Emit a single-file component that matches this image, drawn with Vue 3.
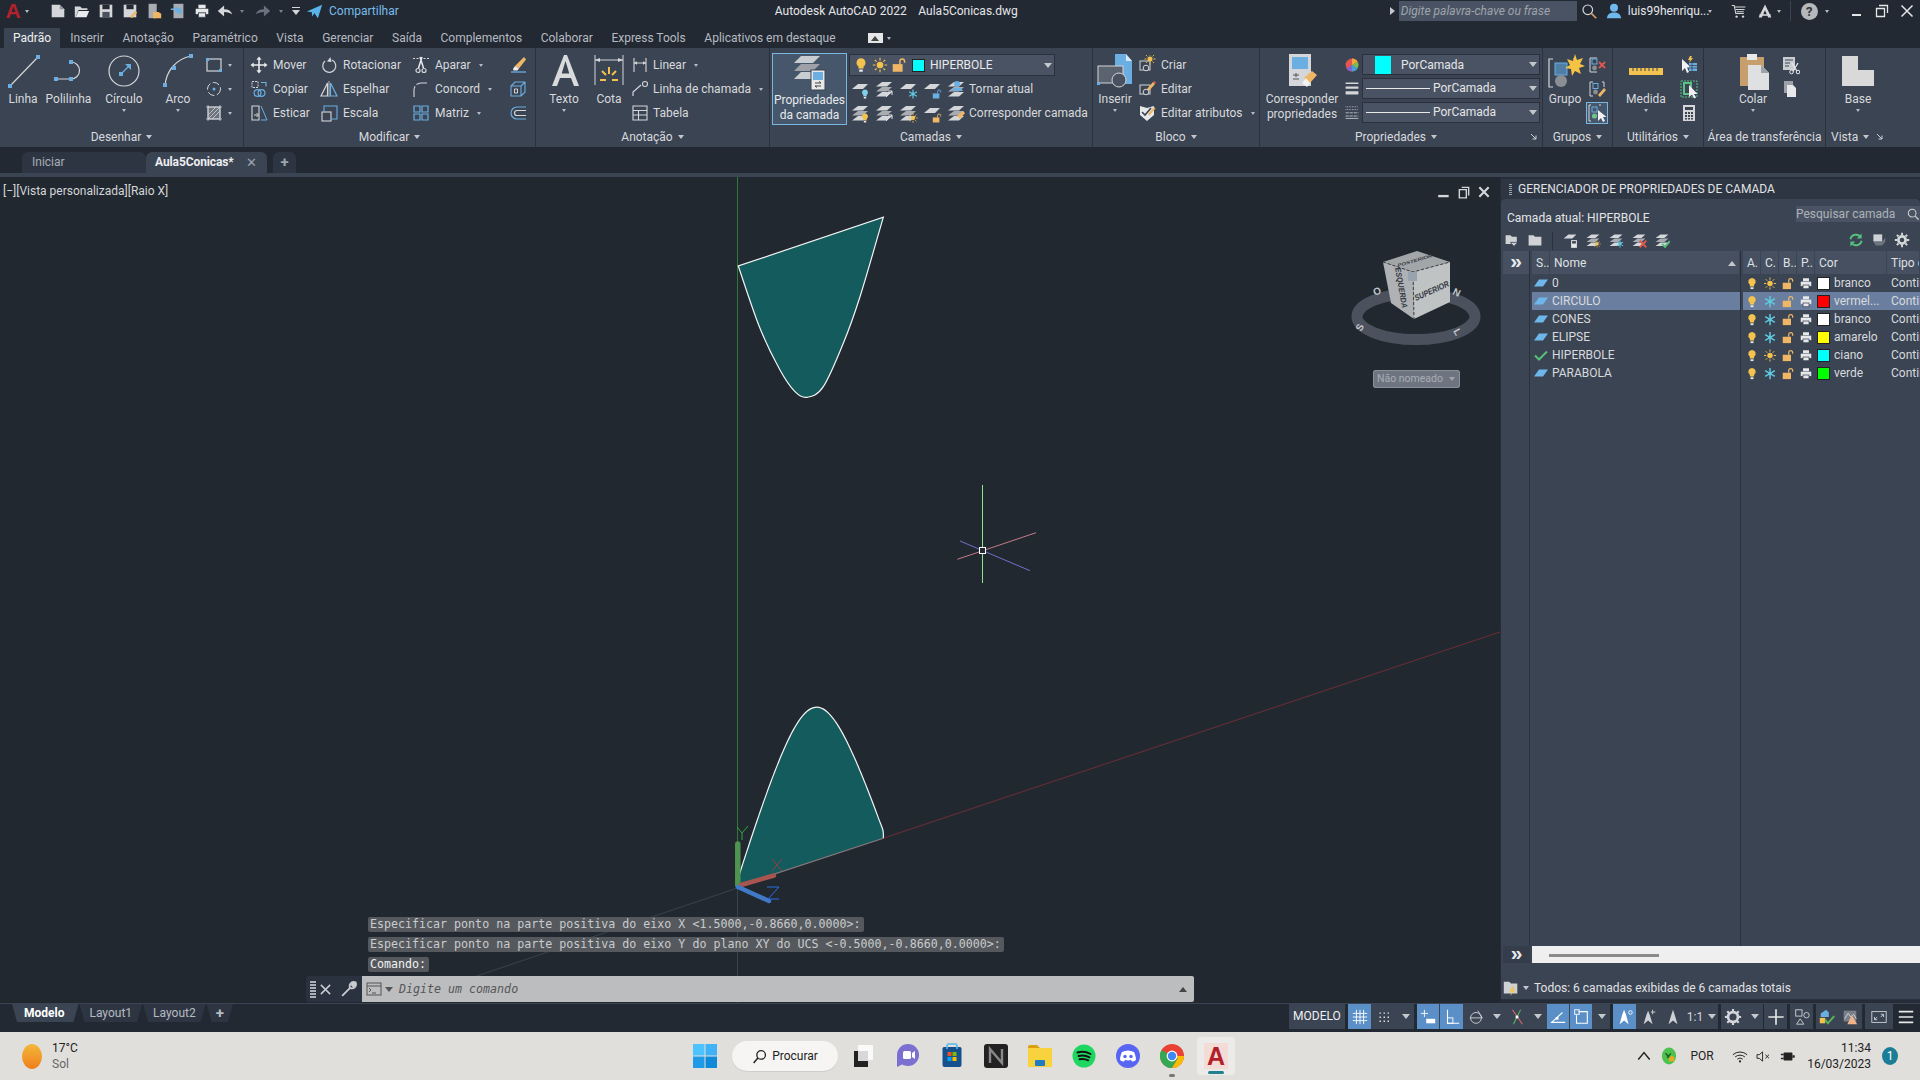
<script setup>
const G = '#d4d6d9'
const B = '#6aaee2'
const Y = '#f4c24e'
const O = '#efb765'

const bulbShape = c => `<path d="M10 2.5a5 5 0 0 0-2.8 9.1V14h5.6v-2.400A5 5 0 0 0 10 2.500z" fill="${c}"/><rect x="8" y="15" width="4" height="2.500" fill="#e8e8e8"/>`
const sunShape = c => `<circle cx="10" cy="10" r="3.600" fill="${c}"/><path d="M10 2v3M10 15v3M2 10h3M15 10h3M4.300 4.300l2 2M13.700 13.700l2 2M15.700 4.300l-2 2M6.300 13.700l-2 2" stroke="${c}" stroke-width="1.300"/>`
const snowShape = c => `<path d="M10 2.500v15M3.500 6.200l13 7.600M16.500 6.200l-13 7.600" stroke="${c}" stroke-width="2"/><circle cx="10" cy="10" r="2.400" fill="${c}"/>`
const lockShape = c => `<rect x="3" y="9" width="11" height="8.500" fill="${c}"/><path d="M11 9V6a2.600 2.600 0 0 1 5.200 0v1.500" fill="none" stroke="${c}" stroke-width="1.600"/>`
const printShape = `<rect x="6" y="3" width="8" height="4" fill="#e6e8ea"/><rect x="3" y="7.500" width="14" height="6" fill="#e6e8ea"/><rect x="6" y="12" width="8" height="5" fill="#e6e8ea" stroke="#3b4453"/>`

// smooth curve through the points read off the drawing (catmull-rom)
function curve(pts) {
  let d = `M${pts[0][0]} ${pts[0][1]}`
  for (let i = 0; i < pts.length - 1; i++) {
    const p0 = pts[i - 1] || pts[i]
    const p1 = pts[i]
    const p2 = pts[i + 1]
    const p3 = pts[i + 2] || p2
    const c1 = [p1[0] + (p2[0] - p0[0]) / 6, p1[1] + (p2[1] - p0[1]) / 6]
    const c2 = [p2[0] - (p3[0] - p1[0]) / 6, p2[1] - (p3[1] - p1[1]) / 6]
    d += `C${c1[0].toFixed(1)} ${c1[1].toFixed(1)} ${c2[0].toFixed(1)} ${c2[1].toFixed(1)} ${p2[0]} ${p2[1]}`
  }
  return d
}
const topCurve = curve([[738.3, 266], [760, 328.3], [780, 370], [795, 391.7], [807.3, 397.3], [823.3, 386.7], [843.3, 343.3], [860, 296.7], [883.3, 217.3]])

// lower section is a tilted hyperbola, fitted to the points on the drawing
const lowPts = []
for (let dx = -76; dx <= 68; dx += 4) {
  const y = 707.3 + 3.3 * (Math.sqrt(dx * dx + 1369) - 37) - 0.15 * dx
  lowPts.push([815 + dx, +y.toFixed(1)])
}
lowPts.push([883.3, 838.3])
const lowCurve = curve(lowPts)

// stacks of layer sheets for the layer tools, the badge goes bottom right
const one = (y = 5) => `<path d="M8 ${y}h10l-5 5H2z" fill="${G}"/>`
const stack = `<path d="M8 3h10l-5 4.500H2z" fill="${G}"/><path d="M8 8h10l-5 4.500H2z" fill="#a9adb2"/><path d="M8 13h10l-5 4.500H2z" fill="${G}"/>`
const mini = (s, x = 9, y = 9) => `<g transform="translate(${x} ${y}) scale(.6)">${s}</g>`

const ic = {
  rect: `<rect x="3" y="4" width="14" height="12" fill="none" stroke="${G}" stroke-width="1.200"/><path d="M2 3h3v3H2zM15 14h3v3h-3z" fill="${B}"/>`,
  cdash: `<circle cx="10" cy="10" r="6.500" fill="none" stroke="${G}" stroke-dasharray="7 2.500"/><circle cx="10" cy="10" r="1.500" fill="${B}"/>`,
  hatch: `<rect x="4" y="4" width="12" height="12" fill="#6d7480" stroke="${G}"/><path d="M4 12l8-8M4 16l12-12M8 16l8-8" stroke="${G}" stroke-width=".8"/><path d="M2 4h16M2 16h16M4 2v16M16 2v16" stroke="${G}" stroke-width=".7"/>`,
  move: `<path d="M10 1.500l2.600 3.200h-1.800v4.500h4.500V7.400L18.500 10l-3.200 2.600v-1.800h-4.500v4.500h1.800L10 18.500l-2.600-3.200h1.800v-4.500H4.700v1.800L1.500 10l3.200-2.600v1.800h4.500V4.700H7.400z" fill="#e9ebed"/>`,
  rotate: `<path d="M13 5a6.500 6.500 0 1 1-7 1" fill="none" stroke="${G}" stroke-width="1.200"/><path d="M6.500 2l1 5-4.500-.5z" fill="${G}" transform="translate(5 0)"/>`,
  trim: `<path d="M2 3.500h16" stroke="${G}" stroke-dasharray="2 1.500"/><path d="M11 2L7.500 13M9 2l3.500 11" stroke="#e9ebed" stroke-width="1.500"/><circle cx="7" cy="15.500" r="2" fill="none" stroke="${G}" stroke-width="1.200"/><circle cx="13" cy="15.500" r="2" fill="none" stroke="${G}" stroke-width="1.200"/>`,
  eraser: `<path d="M16 2l2 2.500-7 9-4-2.500z" fill="${O}"/><path d="M7 11l4 2.500-1.500 2H5.500L5 14z" fill="#eee"/><path d="M3 17h15" stroke="${B}" stroke-width="1.300"/>`,
  copy: `<rect x="3" y="2.500" width="6" height="6" fill="none" stroke="${G}" stroke-dasharray="2 1"/><path d="M12 3.500h5v4" fill="none" stroke="${B}" stroke-width="1.200"/><circle cx="8.500" cy="14" r="3.400" fill="none" stroke="${B}" stroke-width="1.200"/><circle cx="12.500" cy="14" r="3.400" fill="none" stroke="${B}" stroke-width="1.200"/>`,
  mirror: `<path d="M8.500 4v13H2z" fill="none" stroke="${G}" stroke-width="1.200"/><path d="M11.500 4v13H18z" fill="none" stroke="${B}" stroke-width="1.200"/><path d="M10 2v16" stroke="${G}" stroke-width=".8"/>`,
  fillet: `<path d="M3 18V11a7 7 0 0 1 7-7h7" fill="none" stroke="${G}" stroke-width="1.100" stroke-dasharray="11 2"/>`,
  box3d: `<path d="M3 7h10v10H3zM3 7l4-4h10v10l-4 4M13 7l4-4" fill="none" stroke="${B}" stroke-width="1.100"/><path d="M6.500 10h3v4h-3z" fill="none" stroke="${G}"/>`,
  stretch: `<path d="M3 3h7v14H3z" fill="none" stroke="${G}" stroke-width="1.100"/><path d="M12 3l6 14h-6" fill="none" stroke="${B}" stroke-width="1"/><path d="M5 12h4M7.500 10l2 2-2 2" fill="none" stroke="${G}"/>`,
  scale: `<rect x="3" y="9" width="9" height="9" fill="none" stroke="${G}" stroke-width="1.100"/><path d="M5 9V3h13v13h-6" fill="none" stroke="${B}" stroke-width="1.100"/>`,
  matrix: `<path d="M3 3h6v6H3zM11 3h6v6h-6zM3 11h6v6H3zM11 11h6v6h-6z" fill="none" stroke="${B}" stroke-width="1.200"/>`,
  offset: `<path d="M18 4H9a6 6 0 0 0 0 12h9" fill="none" stroke="${B}" stroke-width="1.200"/><path d="M18 7.500H9a2.500 2.500 0 0 0 0 5h9" fill="none" stroke="${G}" stroke-width="1.200"/>`,
  dim: `<path d="M4 3v14M16 3v14M4 8h12" stroke="${G}" stroke-width="1.100"/><path d="M4 8l3-1.800v3.600zM16 8l-3-1.800v3.600z" fill="${G}"/>`,
  leader: `<circle cx="15" cy="5" r="2.500" fill="none" stroke="${G}" stroke-width="1.100"/><path d="M3 17v-4l8-7" fill="none" stroke="${G}" stroke-width="1.200"/>`,
  table: `<path d="M3 3h14v14H3zM3 7.500h14M3 12h14M8.500 7.500V17" fill="none" stroke="${G}" stroke-width="1.100"/>`,
  create: `<rect x="3" y="6" width="10" height="9" fill="none" stroke="${G}"/><circle cx="9" cy="13" r="2.800" fill="#3b4453" stroke="${G}"/><g transform="translate(6 -3) scale(.7)">${sunShape(Y)}</g>`,
  edit: `<rect x="3" y="6" width="10" height="9" fill="none" stroke="${G}"/><circle cx="9" cy="13" r="2.800" fill="#3b4453" stroke="${G}"/><path d="M10 10l6-7 2 2-6 7z" fill="${O}"/><path d="M16 3l2 2 1-1.500-1.500-1.500z" fill="#e25b4f"/>`,
  attrs: `<path d="M3 3l7 2 7-2v9l-7 6-7-6z" fill="#e6e8ea"/><path d="M5 9l3 3 6-7" fill="none" stroke="#3b4453" stroke-width="1.600"/><path d="M11 11l6-7 1.500 1.500-6 7z" fill="${O}"/>`,
  groupX: `<path d="M3 3h7M3 17h7M3 3v14" fill="none" stroke="${G}"/><rect x="5" y="4" width="5" height="5" fill="none" stroke="${B}"/><circle cx="7.500" cy="13" r="2.400" fill="#8a8f96"/><path d="M12 7l6 6M18 7l-6 6" stroke="#e2574c" stroke-width="1.800"/>`,
  groupEd: `<path d="M3 3h3M3 17h3M3 3v14M15 3h2v5" fill="none" stroke="${G}"/><rect x="6" y="4.500" width="5" height="5" fill="none" stroke="${B}"/><circle cx="8.500" cy="13" r="2.400" fill="#8a8f96"/><path d="M11 16l6-7 2 2-6 7z" fill="${O}"/>`,
  groupSel: `<path d="M4 2H2v16h2M12 2h2" fill="none" stroke="${G}"/><rect x="5" y="4" width="5" height="5" fill="none" stroke="${B}"/><circle cx="7.500" cy="13" r="2.600" fill="#6fc28c"/><path d="M11 7v11l3-3 2 4 2-1-2-4h3.500z" fill="#f2f2f2"/>`,
  pick: `<path d="M3 4v12l3-3 2 5 2-1-2-4.500h4z" fill="#f2f2f2"/><rect x="10" y="8" width="8" height="8" fill="${B}"/><path d="M10 10.500h8M10 13h8M13 8v8" stroke="#3b4453" stroke-width=".8"/><path d="M11 1l-2 4h2l-1 3 4-5h-2l1-2z" fill="${Y}"/>`,
  qsel: `<rect x="2" y="2" width="16" height="16" fill="none" stroke="#5bc184" stroke-dasharray="2 1"/><rect x="5" y="4" width="7" height="11" fill="none" stroke="#5bc184" stroke-width="2"/><path d="M10 6v12l3-2.500 2 4 2-1-2-3.500h3.500z" fill="#f2f2f2"/>`,
  calc: `<rect x="4" y="2" width="12" height="16" fill="#d4d6d9"/><rect x="6" y="4" width="8" height="3" fill="#3b4453"/><path d="M6 9h2v2H6zM9 9h2v2H9zM12 9h2v2h-2zM6 12h2v2H6zM9 12h2v2H9zM12 12h2v2h-2zM6 15h2v1.500H6zM9 15h2v1.500H9zM12 15h2v1.500h-2z" fill="#3b4453"/>`,
  cut: `<rect x="3" y="2" width="12" height="13" fill="#c9ccd0"/><path d="M5 5h8M5 8h5M5 11h4" stroke="#3b4453"/><path d="M12 8l6 10M18 8l-6 10" stroke="#e9ebed" stroke-width="1.300"/><circle cx="11.500" cy="17" r="1.800" fill="#3b4453" stroke="#e9ebed"/><circle cx="18" cy="17" r="1.800" fill="#3b4453" stroke="#e9ebed"/>`,
  copy2: `<rect x="4" y="2" width="9" height="12" fill="#9ea2a8"/><path d="M7 6h6l3 3v9H7z" fill="#e6e8ea"/>`,
  color: `<circle cx="10" cy="10" r="8" fill="#e2574c"/><path d="M10 10V2a8 8 0 0 1 7 4z" fill="#f0a63a"/><path d="M10 10l7-4a8 8 0 0 1 0 8z" fill="#74c04d"/><path d="M10 10l7 4a8 8 0 0 1-7 4z" fill="#3fa2d8"/><path d="M10 10v8a8 8 0 0 1-7-4z" fill="#8761c8"/>`,
  weight: `<path d="M2 3h16v2H2zM2 8h16v3H2zM2 14h16v4H2z" fill="${G}"/>`,
  ltype: `<path d="M2 3.500h16M2 7h16" stroke="${G}" stroke-dasharray="1 1"/><path d="M2 11h16M2 15h16" stroke="${G}" stroke-dasharray="4 1"/><path d="M2 18h16" stroke="${G}"/>`
}

// layer tools of the Camadas panel, row by row
const layerRow1 = [
  one() + mini(bulbShape('#7fd0e8')),
  stack + `<path d="M12 18l6-6M18 16v-4h-4" fill="none" stroke="#e8e8e8"/>`,
  one() + mini(snowShape('#5fc8de')),
  one() + mini(lockShape(B)),
  stack + `<circle cx="11" cy="5" r="3" fill="${B}"/><path d="M5 12h12l-2-3H8z" fill="${B}"/>`
]
const layerRow2 = [
  stack + mini(bulbShape(Y)),
  stack + `<path d="M12 18l6-6M18 16v-4h-4" fill="none" stroke="#e8e8e8"/>`,
  stack + mini(sunShape(Y)),
  one() + mini(lockShape(O)),
  stack + `<path d="M11 13l6-5 2 2-5 6z" fill="${O}"/>`
]

const panels = [
  { name: 'Desenhar', cls: 'p-draw', items: [
    { big: 'Linha', w: 'w46', caret: false, svg: `<path d="M7 33L35 4" stroke="${G}" stroke-width="1.200"/><path d="M5 31h4v4H5zM33 2h4v4h-4z" fill="${B}"/>` },
    { big: 'Polilinha', w: 'w45', svg: `<path d="M7 26h15M21 9h1a8.500 8.500 0 0 1 0 17" fill="none" stroke="${G}" stroke-width="1.200"/><path d="M5 24h4v4H5zM20 24h4v4h-4zM20 7h4v4h-4z" fill="${B}"/>` },
    { big: 'Círculo', w: 'w66', caret: true, svg: `<circle cx="20" cy="18" r="15" fill="none" stroke="${G}" stroke-width="1.200"/><path d="M17 21l8-8" stroke="${B}" stroke-width="1.200"/><path d="M15 19h4v4h-4z" fill="${B}"/><path d="M27 11v6l-6-6z" fill="${B}"/>` },
    { big: 'Arco', w: 'w42', caret: true, svg: `<path d="M7 33C8 18 18 6 33 3" fill="none" stroke="${G}" stroke-width="1.200"/><path d="M5 30h4v4H5zM14 13h4v4h-4zM31 1h4v4h-4z" fill="${B}"/>` },
    { rows: [{ icon: 'rect', caret: true }, { icon: 'cdash', caret: true }, { icon: 'hatch', caret: true }], w: 'r-draw' }
  ] },
  { name: 'Modificar', cls: 'p-mod', items: [
    { rows: [{ icon: 'move', text: 'Mover' }, { icon: 'copy', text: 'Copiar' }, { icon: 'stretch', text: 'Esticar' }], w: 'r-70' },
    { rows: [{ icon: 'rotate', text: 'Rotacionar' }, { icon: 'mirror', text: 'Espelhar' }, { icon: 'scale', text: 'Escala' }], w: 'r-92' },
    { rows: [{ icon: 'trim', text: 'Aparar', caret: true }, { icon: 'fillet', text: 'Concord', caret: true }, { icon: 'matrix', text: 'Matriz', caret: true }], w: 'r-97' },
    { rows: [{ icon: 'eraser' }, { icon: 'box3d' }, { icon: 'offset' }] }
  ] },
  { name: 'Anotação', cls: 'p-ann', items: [
    { big: 'Texto', w: 'w48', caret: true, svg: `<path d="M20 2h3l12 31h-5l-3-8H16l-3 8H8zM21.500 8L17.700 20.500h7.600z" fill="#d8dadc" fill-rule="evenodd"/>` },
    { big: 'Cota', w: 'w42', svg: `<path d="M6 2v30M34 2v30M6 7h28" stroke="${G}" stroke-width="1"/><path d="M6 7l5-2v4zM34 7l-5-2v4z" fill="${G}"/><path d="M20 14v7M13 18l4 4M27 18l-4 4M11 27h6M23 27h6" stroke="${Y}" stroke-width="2"/>` },
    { rows: [{ icon: 'dim', text: 'Linear', caret: true }, { icon: 'leader', text: 'Linha de chamada', caret: true }, { icon: 'table', text: 'Tabela' }], w: 'r-ann' }
  ] },
  { name: 'Camadas', cls: 'p-lay', custom: 'layers' },
  { name: 'Bloco', cls: 'p-blk', items: [
    { big: 'Inserir', w: 'w44', caret: true, svg: `<path d="M20 1h11l6 7v23H20z" fill="${B}"/><path d="M31 1l6 7h-6z" fill="#d7e7f3"/><rect x="3" y="13" width="25" height="17" fill="#5b6370" stroke="${G}"/><circle cx="24" cy="27" r="7" fill="#4a5260" stroke="${G}"/><path d="M2 29h3v3H2z" fill="${B}"/>` },
    { rows: [{ icon: 'create', text: 'Criar' }, { icon: 'edit', text: 'Editar' }, { icon: 'attrs', text: 'Editar atributos', caret: true }], w: 'r-blk' }
  ] },
  { name: 'Propriedades', cls: 'p-prop', custom: 'props', arrow: true },
  { name: 'Grupos', cls: 'p-grp', items: [
    { big: 'Grupo', w: 'w44', svg: `<path d="M8 6H4v28h4M28 6h3" fill="none" stroke="${G}" stroke-width="1.200"/><rect x="10" y="10" width="12" height="12" fill="#4f7fa6" stroke="${B}"/><circle cx="16" cy="28" r="6" fill="#8a8f96"/><path d="M30 1l2 6 6-2-3 6 5 2-6 2 2 6-6-3-3 5-1-7-6-1 5-3-3-6 6 2z" fill="#f5c344"/>` },
    { rows: [{ icon: 'groupX' }, { icon: 'groupEd' }, { icon: 'groupSel', on: true }] }
  ] },
  { name: 'Utilitários', cls: 'p-utl', items: [
    { big: 'Medida', w: 'w66', caret: true, svg: `<rect x="3" y="15" width="34" height="7" fill="${Y}"/><path d="M7 15v3M11 15v3M15 15v3M19 15v3M23 15v3M27 15v3M31 15v3" stroke="#3b4453"/>` },
    { rows: [{ icon: 'pick' }, { icon: 'qsel' }, { icon: 'calc' }] }
  ] },
  { name: 'Área de transferência', cls: 'p-clip', noCaret: true, items: [
    { big: 'Colar', w: 'w54 colar', caret: true, svg: `<rect x="7" y="4" width="24" height="29" fill="#c79f6c"/><rect x="14" y="1" width="10" height="6" fill="#e8e8e8"/><path d="M15 12h13l8 8v17H15z" fill="#dfe0e2"/><path d="M28 12l8 8h-8z" fill="#9fa3a8"/>` },
    { rows: [{ icon: 'cut' }, { icon: 'copy2' }, {}] }
  ] },
  { name: 'Vista', cls: 'p-view', arrow: true, items: [
    { big: 'Base', w: 'w64', caret: true, svg: `<path d="M4 3h16v14h16v16H4z" fill="#d9d9d9"/>` }
  ] }
]

const tabs = ['Padrão', 'Inserir', 'Anotação', 'Paramétrico', 'Vista', 'Gerenciar', 'Saída', 'Complementos', 'Colaborar', 'Express Tools', 'Aplicativos em destaque']

const quick = [
  `<path d="M3 3h9l5 5v9H3z" fill="${G}"/><path d="M12 3l5 5h-5z" fill="#8d929a"/>`,
  `<path d="M2 5h6l2 2h6v2H6l-3 8H2z" fill="${G}"/><path d="M6 10h12l-3 7H3z" fill="#e8eaec"/>`,
  `<path d="M3 3h14v14H3z" fill="${G}"/><rect x="6" y="3" width="8" height="5" fill="#232a34"/><rect x="6" y="11" width="8" height="6" fill="#4a5260"/>`,
  `<path d="M3 3h14v14H3z" fill="${G}"/><rect x="6" y="3" width="8" height="5" fill="#232a34"/><path d="M10 16l6-6 2 2-6 6z" fill="${O}"/>`,
  `<path d="M4 2h9v16H4z" fill="#a8acb2"/><path d="M9 11h6l3 2v5H9z" fill="${O}"/>`,
  `<path d="M5 2h11v16H5z" fill="#a8acb2"/><path d="M2 8h8M7 5l3 3-3 3" fill="none" stroke="${B}" stroke-width="1.600"/><rect x="9" y="7" width="5" height="6" fill="${B}"/>`,
  printShape
]

const layerNames = [
  { n: '0', color: '#ffffff', c: 'branco', sun: true },
  { n: 'CIRCULO', color: '#ff0000', c: 'vermel...', sel: true },
  { n: 'CONES', color: '#ffffff', c: 'branco' },
  { n: 'ELIPSE', color: '#ffff00', c: 'amarelo' },
  { n: 'HIPERBOLE', color: '#00ffff', c: 'ciano', sun: true, cur: true },
  { n: 'PARABOLA', color: '#00ff00', c: 'verde' }
]

const palTools = [
  `<path d="M2 4h6l2 2h6v9H2z" fill="#cfd2d5"/><path d="M8 13h9l-4.500 5z" fill="#cfd2d5" stroke="#3b4453"/>`,
  `<path d="M2 4h6l2 2h8v11H2z" fill="#cfd2d5"/>`
]
const palTools2 = [
  one(3) + mini(`<rect x="4" y="2" width="12" height="16" fill="#e8e8e8"/><rect x="6" y="4" width="8" height="5" fill="#3b4453"/>`),
  stack + mini(sunShape(Y)),
  stack + mini(snowShape('#5fc8de')),
  stack + mini(`<path d="M3 3l14 14M17 3L3 17" stroke="#e2574c" stroke-width="4"/>`),
  stack + mini(`<path d="M2 10l6 6L18 4" fill="none" stroke="#57c07a" stroke-width="4"/>`)
]

const car = { caret: true, w: 17 }
const statusGroups = [
  { items: [
    { w: 23, on: true, svg: `<path d="M6 2v16M10 2v16M14 2v16M2 6h16M2 10h16M2 14h16" stroke="#fff"/>` },
    { w: 24, svg: `<path d="M5 5h1.500v1.500H5zM9.500 5H11v1.500H9.500zM14 5h1.500v1.500H14zM5 9.500h1.500V11H5zM9.500 9.500H11V11H9.500zM14 9.500h1.500V11H14zM5 14h1.500v1.500H5zM9.500 14H11v1.500H9.500zM14 14h1.500v1.500H14z" fill="#e8e8e8"/>` },
    car
  ] },
  { items: [
    { w: 22, on: true, svg: `<path d="M6 2v8M2 6h8" stroke="#fff"/><rect x="8" y="12" width="10" height="5" fill="#fff"/>` },
    { w: 23, on: true, svg: `<path d="M5 2v15h13" fill="none" stroke="#fff" stroke-width="1.200"/><rect x="5" y="11" width="6" height="6" fill="none" stroke="#fff"/>` },
    { w: 23, svg: `<circle cx="10" cy="11" r="6" fill="none" stroke="#cfd2d5"/><path d="M3 11h14L12 3" fill="none" stroke="#cfd2d5"/>` },
    car,
    { w: 22, svg: `<path d="M5 2l11 16" stroke="#d96b6b" stroke-width="1.200"/><path d="M14 2L6 18" stroke="#58b45f" stroke-width="1.200"/><rect x="8.500" y="8.500" width="3" height="3" fill="#fff"/>` },
    car,
    { w: 22, on: true, svg: `<path d="M2 16h16M3 16L15 5" fill="none" stroke="#fff" stroke-width="1.200"/><rect x="7.500" y="10" width="3" height="3" fill="#fff"/>` },
    { w: 22, on: true, svg: `<path d="M7 4h10v13H5V8" fill="none" stroke="#fff" stroke-width="1.200"/><rect x="3" y="2" width="5" height="5" fill="none" stroke="#fff"/>` },
    car
  ] },
  { items: [
    { w: 23, on: true, svg: `<path d="M9 2l2 5 3 11-5-4-5 4 3-11z" fill="#fff"/><circle cx="16" cy="5" r="2" fill="none" stroke="#fff"/>` },
    { w: 23, svg: `<path d="M9 3l2 5 3 10-5-4-5 4 3-10z" fill="#cfd2d5"/><path d="M14 2v5M12 4.500h5" stroke="#cfd2d5"/>` },
    { w: 23, svg: `<path d="M10 2l2 6 3 10-5-4-5 4 3-10z" fill="#cfd2d5"/>` },
    { w: 20, text: '1:1' },
    { caret: true, w: 12 }
  ] },
  { items: [
    { w: 24, svg: `<circle cx="10" cy="10" r="5.500" fill="none" stroke="#d4d6d9" stroke-width="3"/><path d="M10 1v3M10 16v3M1 10h3M16 10h3M3.600 3.600l2 2M14.400 14.400l2 2M16.400 3.600l-2 2M5.600 14.400l-2 2" stroke="#d4d6d9" stroke-width="2.400"/>` },
    car
  ] },
  { tight: true, items: [{ w: 23, svg: `<path d="M10 1.500v17M1.500 10h17" stroke="#e8e8e8" stroke-width="1.800"/>` }] },
  { items: [{ w: 23, svg: `<rect x="3" y="2" width="7" height="7" fill="none" stroke="#cfd2d5"/><circle cx="15" cy="8" r="3" fill="none" stroke="#cfd2d5"/><path d="M8 12l4 6H4z" fill="none" stroke="#cfd2d5"/>` }] },
  { items: [
    { w: 21, svg: `<path d="M3 6l6-4 3 3v5H3z" fill="${B}"/><rect x="2" y="11" width="6" height="6" fill="${Y}"/><path d="M8 13l3 4 7-8" fill="none" stroke="#58b45f" stroke-width="2.200"/>` },
    { w: 24, svg: `<rect x="3" y="3" width="14" height="12" fill="#7a808a"/><path d="M4 12l4-6 3 4 3-3 3 5" fill="none" stroke="#d4d6d9"/><path d="M12 8l6 10H7z" fill="#f0b48a"/>` }
  ] },
  { items: [{ w: 28, svg: `<rect x="2" y="4" width="16" height="12" fill="none" stroke="#cfd2d5"/><path d="M5 13l3-3M5 10v3h3M15 7l-3 3M15 10V7h-3" fill="none" stroke="#cfd2d5"/>` }] },
  { plain: true, items: [{ w: 24, svg: `<path d="M2 4h16M2 10h16M2 16h16" stroke="#e8e8e8" stroke-width="1.800"/>` }] }
]

const apps = [
  `<path d="M7 2h15v15H7z" fill="#fff" opacity=".85"/><path d="M3 8h14v16H3z" fill="#222"/><path d="M7 8h10v10H7z" fill="#d8d8d8"/>`,
  `<circle cx="13" cy="12" r="11" fill="#7b6fd0"/><path d="M2 12v12l6-3z" fill="#7b6fd0"/><rect x="8" y="8" width="8" height="8" rx="1.500" fill="#fff"/><path d="M17 10l3-2v8l-3-2z" fill="#fff"/>`,
  `<path d="M5 4h16a1.500 1.500 0 0 1 1.500 1.500V22a2 2 0 0 1-2 2h-15a2 2 0 0 1-2-2V5.500A1.500 1.500 0 0 1 5 4z" fill="#17518d"/><path d="M8 6V3a2 2 0 0 1 2-2h6a2 2 0 0 1 2 2v3" fill="none" stroke="#58b9ec" stroke-width="1.600"/><rect x="8.500" y="9" width="4" height="4" fill="#f25022"/><rect x="13.500" y="9" width="4" height="4" fill="#7fba00"/><rect x="8.500" y="14" width="4" height="4" fill="#00a4ef"/><rect x="13.500" y="14" width="4" height="4" fill="#ffb900"/>`,
  `<rect x="1" y="1" width="24" height="24" rx="3" fill="#222"/><path d="M7 20V6l12 14V6" fill="none" stroke="#888" stroke-width="2.400"/>`,
  `<path d="M1 4a2 2 0 0 1 2-2h7l3 3H1z" fill="#d9a010"/><rect x="1" y="5" width="24" height="19" fill="#f9d33e"/><rect x="8" y="17" width="10" height="6" rx="1" fill="#1f7cc4"/>`,
  `<circle cx="13" cy="13" r="11.500" fill="#1ed760"/><path d="M6.500 9.500c4-1.200 9-.8 13 1.500M7.500 13c3.500-1 7.500-.6 11 1.300M8.500 16.300c3-.8 6-.4 8.800 1" fill="none" stroke="#111" stroke-width="2" stroke-linecap="round"/>`,
  `<circle cx="13" cy="13" r="12" fill="#5865f2"/><path d="M7 9c4-2 8-2 12 0 1.500 3 2 6 2 8-1.500 1-3 1.500-4 1.500l-1-1.500c-2 .5-4 .5-6 0l-1 1.500c-1 0-2.500-.5-4-1.500 0-2 .5-5 2-8z" fill="#fff"/><circle cx="10" cy="13.500" r="1.700" fill="#5865f2"/><circle cx="16" cy="13.500" r="1.700" fill="#5865f2"/>`
]
</script>

<template>
  <div class="app">
    <header class="titlebar">
      <span class="logo">A</span>
      <i class="caret c1"></i>
      <svg v-for="(q, i) in quick" :key="i" class="i qa" viewBox="0 0 20 20" v-html="q"></svg>
      <svg class="i undo" viewBox="0 0 20 20"><path d="M2 10l7-6v4c5 0 8 2 9 6-2-2-5-3-9-3v5z" fill="#d4d6d9"/></svg>
      <i class="caret dim"></i>
      <svg class="i redo" viewBox="0 0 20 20"><path d="M18 10l-7-6v4c-5 0-8 2-9 6 2-2 5-3 9-3v5z" fill="#6a7280"/></svg>
      <i class="caret dim"></i>
      <svg class="i cust" viewBox="0 0 10 10"><path d="M1 1.500h8" stroke="#d4d6d9"/><path d="M1 4h8L5 9z" fill="#d4d6d9"/></svg>
      <svg class="i share" viewBox="0 0 20 20"><path d="M1 10L19 2l-5 16-4-6-3 4v-5z" fill="#59b4ea"/></svg>
      <span class="share-text">Compartilhar</span>
      <div class="doc-title"><span>Autodesk AutoCAD 2022</span><span>Aula5Conicas.dwg</span></div>
      <i class="tri-r"></i>
      <div class="kw-search">Digite palavra-chave ou frase</div>
      <svg class="i srch" viewBox="0 0 20 20"><circle cx="8.500" cy="8.500" r="6" fill="none" stroke="#d4d6d9" stroke-width="1.500"/><path d="M13 13l6 6" stroke="#e0a060" stroke-width="2"/></svg>
      <svg class="i user" viewBox="0 0 20 20"><circle cx="10" cy="6" r="5" fill="#6fb8ee"/><path d="M1 19c1-5 4-7 9-7s8 2 9 7z" fill="#6fb8ee"/></svg>
      <span class="uname">luis99henriqu...</span>
      <i class="caret"></i>
      <svg class="i cart" viewBox="0 0 20 20"><path d="M1 3h3l2 10h10M5 5h13M6 8h11M7 11h9" fill="none" stroke="#d4d6d9" stroke-width="1.300"/><circle cx="7" cy="17" r="1.500" fill="#d4d6d9"/><circle cx="15" cy="17" r="1.500" fill="#d4d6d9"/></svg>
      <svg class="i aut" viewBox="0 0 20 20"><path d="M10 2l8 16h-4l-4-9-4 9H2z" fill="#d4d6d9"/><path d="M3 14h14v2H3z" fill="#d4d6d9"/></svg>
      <i class="caret"></i>
      <span class="sep"></span>
      <span class="help">?</span>
      <i class="caret"></i>
      <svg class="i win w-min" viewBox="0 0 14 14"><path d="M2 11h9" stroke="#e4e6e8" stroke-width="2"/></svg>
      <svg class="i win" viewBox="0 0 14 14"><path d="M4 1.500h8.500V9M1.500 4.500h8v8h-8z" fill="none" stroke="#e4e6e8" stroke-width="1.300"/></svg>
      <svg class="i win" viewBox="0 0 14 14"><path d="M1.500 1.500l11 11M12.500 1.500l-11 11" stroke="#e4e6e8" stroke-width="1.500"/></svg>
    </header>

    <nav class="ribbon-tabs">
      <span v-for="(t, i) in tabs" :key="t" class="rtab" :class="{ active: i === 0 }">{{ t }}</span>
      <span class="state-btn"><i class="tri-up"></i></span><i class="caret"></i>
    </nav>

    <div class="ribbon">
      <section v-for="p in panels" :key="p.name" class="panel" :class="p.cls">
        <div class="body">
          <template v-if="p.custom === 'layers'">
            <div class="layer-big">
              <svg viewBox="0 0 40 38">
                <path d="M11 2h19l-7 7H4z" fill="#c9ccd0"/>
                <path d="M11 10h19l-7 7H4z" fill="#9ea2a8"/>
                <path d="M11 18h19l-7 7H4z" fill="#c9ccd0"/>
                <rect x="21" y="16" width="14" height="20" fill="#e8e8e8" stroke="#3b4453"/>
                <rect x="23" y="18" width="10" height="8" fill="#6aaee2"/>
                <path d="M25 29h6M31 29l-2-1.500M25 32h6M25 32l2 1.500" fill="none" stroke="#444"/>
              </svg>
              <span>Propriedades</span><span>da camada</span>
            </div>
            <div class="rows layer-rows">
              <div class="layer-drop">
                <svg class="s" viewBox="0 0 20 20" v-html="bulbShape(Y)"></svg>
                <svg class="s" viewBox="0 0 20 20" v-html="sunShape(Y)"></svg>
                <svg class="s" viewBox="0 0 20 20" v-html="lockShape(O)"></svg>
                <span class="swatch cyan"></span>
                <span class="dtext">HIPERBOLE</span>
                <i class="tri-d"></i>
              </div>
              <div class="row">
                <svg v-for="(s, i) in layerRow1" :key="i" class="lt" viewBox="0 0 20 20" v-html="s"></svg>
                <span class="lt-text">Tornar atual</span>
              </div>
              <div class="row">
                <svg v-for="(s, i) in layerRow2" :key="i" class="lt" viewBox="0 0 20 20" v-html="s"></svg>
                <span class="lt-text">Corresponder camada</span>
              </div>
            </div>
          </template>

          <template v-else-if="p.custom === 'props'">
            <div class="big w84">
              <svg class="bigic" viewBox="0 0 40 38"><rect x="7" y="1" width="22" height="32" fill="#d4d6d9"/><rect x="10" y="4" width="16" height="12" fill="#6aaee2"/><path d="M11 22h6M11 26h6M14 20v4" stroke="#555"/><path d="M22 25l8-7 5 4-7 8z" fill="#efb765"/><path d="M20 30l4-5 4 5-3 4z" fill="#f2f2f2"/></svg>
              <span class="lbl">Corresponder</span><span class="lbl">propriedades</span>
            </div>
            <div class="rows prop-ic">
              <div class="row"><svg class="s18" viewBox="0 0 20 20" v-html="ic.color"></svg></div>
              <div class="row"><svg class="s18" viewBox="0 0 20 20" v-html="ic.weight"></svg></div>
              <div class="row"><svg class="s18" viewBox="0 0 20 20" v-html="ic.ltype"></svg></div>
            </div>
            <div class="rows prop-drops">
              <div class="row"><div class="pdrop"><span class="swatch big-sw cyan"></span><span class="ptext">PorCamada</span><i class="tri-d"></i></div></div>
              <div class="row"><div class="pdrop"><span class="pline"></span><span class="ptext2">PorCamada</span><i class="tri-d"></i></div></div>
              <div class="row"><div class="pdrop"><span class="pline"></span><span class="ptext2">PorCamada</span><i class="tri-d"></i></div></div>
            </div>
          </template>

          <template v-else>
            <template v-for="(it, k) in p.items" :key="k">
              <div v-if="it.big" class="big" :class="it.w">
                <svg class="bigic" viewBox="0 0 40 38" v-html="it.svg"></svg>
                <span class="lbl">{{ it.big }}</span>
                <i v-if="it.caret" class="caret"></i>
              </div>
              <div v-else class="rows" :class="it.w">
                <div v-for="(r, n) in it.rows" :key="n" class="row">
                  <span v-if="r.icon" class="ibox" :class="{ on: r.on }"><svg viewBox="0 0 20 20" v-html="ic[r.icon]"></svg></span>
                  <span v-if="r.text" class="rtext">{{ r.text }}</span>
                  <i v-if="r.caret" class="caret rc"></i>
                </div>
              </div>
            </template>
          </template>
        </div>
        <div class="panel-label">
          <span>{{ p.name }}</span><i v-if="!p.noCaret" class="tri-d lab"></i>
          <svg v-if="p.arrow" class="corner" viewBox="0 0 8 8"><path d="M1 1l5 5M6 2.500V6H2.500" fill="none" stroke="#cfd2d5"/></svg>
        </div>
      </section>
    </div>

    <div class="doc-tabs">
      <div class="dtab">Iniciar</div>
      <div class="dtab active"><b>Aula5Conicas*</b><span class="x">✕</span></div>
      <div class="dtab plus">+</div>
    </div>

    <main class="main">
      <div class="viewport">
        <svg class="canvas" viewBox="0 177 1500 826" width="1500" height="826">
          <path d="M737.500 888L465 980" stroke="#3a424e"/>
          <path d="M737.500 888V1003" stroke="#3a424e"/>
          <path d="M737.500 177V884" stroke="#2f7a3a"/>
          <path d="M883 838.300L1500 632" stroke="#6d2e36"/>

          <path :d="topCurve + 'Z'" fill="#145b5d" stroke="#f4f4f4" stroke-width="1.200"/>
          <path :d="lowCurve + 'L741 885Z'" fill="#145b5d"/>
          <path :d="lowCurve" fill="none" stroke="#f4f4f4" stroke-width="1.200"/>
          <path d="M741 885L883.300 838.300" stroke="#8c7a7c" stroke-width="1.200"/>

          <!-- UCS icon -->
          <path d="M737.800 844V885" stroke="#4f9350" stroke-width="5.500" stroke-linecap="round"/>
          <path d="M741 885L774 875.500" stroke="#a9554f" stroke-width="4.500" stroke-linecap="round"/>
          <path d="M738 887L769 901" stroke="#3f79c8" stroke-width="4.500" stroke-linecap="round"/>
          <path d="M737 827L742 833L748 826M742 833V840" fill="none" stroke="#2fa83a"/>
          <path d="M772 859L782 871M782 859L772 871" stroke="#8f3f42"/>
          <path d="M767 887H779L768 899H779" fill="none" stroke="#2a6fe0"/>

          <!-- crosshair -->
          <path d="M982.500 485V583" stroke="#8fe38f"/>
          <path d="M957.300 559.300L1036 532.700" stroke="#c87a86"/>
          <path d="M960 541L1030 570.700" stroke="#6f72cc"/>
          <rect x="979.500" y="547.500" width="6" height="6" fill="#212830" stroke="#fff"/>

          <!-- view cube -->
          <ellipse cx="1416" cy="316.500" rx="59" ry="23" fill="none" stroke="#4b525d" stroke-width="11"/>
          <path d="M1383 262L1417 251L1450 262L1413 272Z" fill="#a3a6a8"/>
          <path d="M1383 262L1413 272L1414 319L1391 303Z" fill="#afb2b4"/>
          <path d="M1413 272L1450 262L1450 302L1414 319Z" fill="#c0c3c4"/>
          <path d="M1383 262L1413 272L1450 262M1413 272L1414 319" fill="none" stroke="#3a3f45" stroke-dasharray="3 2"/>
          <rect x="1408" y="272" width="9" height="9" fill="#98a3ae"/>
          <text transform="translate(1416 301) rotate(-24)" class="cube-t" textLength="37" lengthAdjust="spacingAndGlyphs">SUPERIOR</text>
          <text transform="translate(1395 268) rotate(80)" class="cube-t sm" textLength="41" lengthAdjust="spacingAndGlyphs">ESQUERDA</text>
          <text transform="translate(1398 267) rotate(-16) scale(1 .55)" class="cube-t sm" textLength="36" lengthAdjust="spacingAndGlyphs">POSTERIOR</text>
          <text transform="translate(1375 296) rotate(-25)" class="ring-t">O</text>
          <text transform="translate(1452 294) rotate(25)" class="ring-t">N</text>
          <text transform="translate(1361 332) rotate(-60)" class="ring-t">S</text>
          <text transform="translate(1453 331) rotate(60)" class="ring-t">L</text>
        </svg>
        <div class="vp-label">[−][Vista personalizada][Raio X]</div>
        <div class="vp-controls">
          <svg class="i" viewBox="0 0 12 12"><path d="M1 9.500h9" stroke="#d4d6d9" stroke-width="2"/></svg>
          <svg class="i" viewBox="0 0 12 12"><path d="M4 2h6v7M2 4h6v7H2z" fill="none" stroke="#d4d6d9" stroke-width="1.200"/></svg>
          <svg class="i" viewBox="0 0 12 12"><path d="M2 2l8 8M10 2l-8 8" stroke="#d4d6d9" stroke-width="1.800"/></svg>
        </div>
        <div class="named">Não nomeado<i class="tri-o"></i></div>
        <div class="cmd-lines">
          <span>Especificar ponto na parte positiva do eixo X &lt;1.5000,-0.8660,0.0000&gt;:</span>
          <span>Especificar ponto na parte positiva do eixo Y do plano XY do UCS &lt;-0.5000,-0.8660,0.0000&gt;:</span>
          <span class="cur">Comando:</span>
        </div>
        <div class="cmd-bar">
          <div class="cmd-tools">
            <span class="grip"></span>
            <svg viewBox="0 0 14 14"><path d="M2 2l10 10M12 2L2 12" stroke="#c8cbcf" stroke-width="1.600"/></svg>
            <svg viewBox="0 0 14 14"><path d="M1 13l7-7a3.500 3.500 0 0 1 4-5L9.500 3.500l1 1L13 2a3.500 3.500 0 0 1-5 4" fill="none" stroke="#c8cbcf" stroke-width="1.600"/></svg>
          </div>
          <div class="cmd-input">
            <svg class="prompt" viewBox="0 0 16 14"><rect x="1" y="1" width="14" height="12" fill="none" stroke="#555"/><path d="M1 4h14" stroke="#555"/><path d="M3 6l2 2-2 2M6 11h4" fill="none" stroke="#555"/></svg>
            <i class="tri-d dark"></i>
            <span class="hint">Digite um comando</span>
            <i class="tri-up dark"></i>
          </div>
        </div>
      </div>

      <aside class="palette">
        <div class="pal-title"><span class="pgrip"></span>GERENCIADOR DE PROPRIEDADES DE CAMADA</div>
        <div class="pal-body">
          <div class="pal-cur">
            <span>Camada atual: HIPERBOLE</span>
            <div class="pal-search"><span>Pesquisar camada</span>
              <svg class="i" viewBox="0 0 14 14"><circle cx="6" cy="6" r="4.500" fill="none" stroke="#cfd2d5" stroke-width="1.200"/><path d="M9.500 9.500l4 4" stroke="#cfd2d5" stroke-width="1.500"/></svg>
            </div>
          </div>
          <div class="pal-tools">
            <svg v-for="(s, i) in palTools" :key="i" class="pt" viewBox="0 0 20 20" v-html="s"></svg>
            <span class="ptsep"></span>
            <svg v-for="(s, i) in palTools2" :key="'b' + i" class="pt" viewBox="0 0 20 20" v-html="s"></svg>
            <svg class="pt r" viewBox="0 0 20 20"><path d="M3 9a7 7 0 0 1 13-2M17 11a7 7 0 0 1-13 2" fill="none" stroke="#57c07a" stroke-width="2.400"/><path d="M17 2v6h-6zM3 18v-6h6z" fill="#57c07a"/></svg>
            <svg class="pt" viewBox="0 0 20 20"><path d="M3 3h11v9H3z" fill="#cfd2d5"/><path d="M3 12h11l4-5v5l-4 5H6z" fill="#6d7480"/></svg>
            <svg class="pt" viewBox="0 0 20 20"><circle cx="10" cy="10" r="4.500" fill="none" stroke="#d4d6d9" stroke-width="3.400"/><path d="M10 1v3M10 16v3M1 10h3M16 10h3M3.600 3.600l2 2M14.400 14.400l2 2M16.400 3.600l-2 2M5.600 14.400l-2 2" stroke="#d4d6d9" stroke-width="2.400"/></svg>
          </div>
          <div class="pal-table">
            <div class="gutter"><div class="thead"><span class="chev">»</span></div></div>
            <div class="pane names">
              <div class="thead"><span class="th c-s">S..</span><span class="th c-n">Nome</span><i class="tri-up sort"></i></div>
              <div v-for="l in layerNames" :key="l.n" class="lrow" :class="{ sel: l.sel }">
                <svg class="c-s st" viewBox="0 0 18 14">
                  <path v-if="l.cur" d="M3 7l4 4 8-8" fill="none" stroke="#57c07a" stroke-width="2"/>
                  <path v-else d="M7 3h9l-5 7H2z" fill="#6db7ea"/>
                </svg>
                <span class="lname">{{ l.n }}</span>
              </div>
            </div>
            <div class="pane details">
              <div class="thead">
                <span class="th c-i">A.</span><span class="th c-i">C.</span><span class="th c-i">B..</span><span class="th c-i">P..</span>
                <span class="th c-c">Cor</span><span class="th c-t">Tipo de</span>
              </div>
              <div v-for="l in layerNames" :key="l.n" class="lrow" :class="{ sel: l.sel }">
                <svg class="c-i st" viewBox="0 0 20 20" v-html="bulbShape(Y)"></svg>
                <svg class="c-i st" viewBox="0 0 20 20" v-html="l.sun ? sunShape(Y) : snowShape('#5fc8de')"></svg>
                <svg class="c-i st" viewBox="0 0 20 20" v-html="lockShape(O)"></svg>
                <svg class="c-i st" viewBox="0 0 20 20" v-html="printShape"></svg>
                <span class="c-c colorc"><span class="chip" :style="{ background: l.color }"></span>{{ l.c }}</span>
                <span class="c-t">Contin</span>
              </div>
            </div>
          </div>
          <div class="pal-scroll">
            <div class="gutter-b"><span class="chev">»</span></div>
            <div class="hscroll"><span class="thumb"></span></div>
          </div>
          <div class="pal-status">
            <svg class="pt" viewBox="0 0 20 20"><path d="M2 3h6l2 2h7v11H2z" fill="#cfd2d5"/><path d="M12 8l-4 6h3l-2 5 6-7h-3l2-4z" fill="#f4c24e"/></svg>
            <i class="tri-d"></i>
            <span>Todos: 6 camadas exibidas de 6 camadas totais</span>
          </div>
        </div>
      </aside>
    </main>

    <footer class="statusbar">
      <div class="ltabs">
        <span class="ltab active">Modelo</span>
        <span class="ltab">Layout1</span>
        <span class="ltab">Layout2</span>
        <span class="ltab add">+</span>
      </div>
      <div class="status-right">
        <span class="modelo">MODELO</span>
        <div v-for="(g, i) in statusGroups" :key="i" class="sgroup" :class="{ tight: g.tight, plain: g.plain }">
          <span v-for="(s, n) in g.items" :key="n" class="sbtn" :class="{ on: s.on }" :style="{ width: s.w + 'px' }">
            <i v-if="s.caret" class="tri-d"></i>
            <span v-else-if="s.text" class="stext">{{ s.text }}</span>
            <svg v-else viewBox="0 0 20 20" v-html="s.svg"></svg>
          </span>
        </div>
      </div>
    </footer>

    <div class="taskbar">
      <div class="weather">
        <span class="sun"></span>
        <div><div>17°C</div><div class="muted">Sol</div></div>
      </div>
      <svg class="winlogo" viewBox="0 0 24 24"><path d="M0 0h11.500v11.500H0z" fill="#4cc2ff"/><path d="M12.500 0H24v11.500H12.500z" fill="#3fb3f5"/><path d="M0 12.500h11.500V24H0z" fill="#1f9ae8"/><path d="M12.500 12.500H24V24H12.500z" fill="#0f8ad8"/></svg>
      <div class="pill">
        <svg viewBox="0 0 14 14"><circle cx="8.500" cy="5.500" r="4" fill="none" stroke="#222" stroke-width="1.200"/><path d="M5.500 8.500L1.500 13" stroke="#222" stroke-width="1.400"/></svg>
        Procurar
      </div>
      <span v-for="(a, i) in apps" :key="i" class="app-i"><svg viewBox="0 0 26 26" v-html="a"></svg></span>
      <span class="app-i">
        <svg viewBox="0 0 26 26"><circle cx="13" cy="13" r="12" fill="#e94235"/><path d="M13 13L2.600 7A12 12 0 0 0 13 25l6-10z" fill="#34a853"/><path d="M13 13h12a12 12 0 0 1-12 12l6-10z" fill="#fbbc04"/><circle cx="13" cy="13" r="5.400" fill="#fff"/><circle cx="13" cy="13" r="4.200" fill="#4285f4"/></svg>
        <i class="dot"></i>
      </span>
      <span class="app-i acad">
        <span class="acad-a">A</span>
        <i class="run"></i>
      </span>
      <div class="tray">
        <svg class="t-up" viewBox="0 0 14 14"><path d="M2 10l5-6 5 6" fill="none" stroke="#222" stroke-width="1.300"/></svg>
        <svg class="t-g" viewBox="0 0 18 20"><ellipse cx="9" cy="10" rx="8" ry="9.500" fill="#4ec24e"/><path d="M5 7l6 6M11 7l-4 5" stroke="#1d5c1d" stroke-width="1.600"/><path d="M12 10a3 3 0 0 1 3 3v3H9v-3a3 3 0 0 1 3-3z" fill="#e6a91f"/></svg>
        <span class="t-por">POR</span>
        <svg class="t-w" viewBox="0 0 18 14"><path d="M1 5a12 12 0 0 1 16 0M3.500 7.500a8.500 8.500 0 0 1 11 0M6 10a4.500 4.500 0 0 1 6 0" fill="none" stroke="#222" stroke-width="1.100"/><circle cx="9" cy="12.500" r="1.200" fill="#222"/></svg>
        <svg class="t-s" viewBox="0 0 16 14"><path d="M1 5h2.500L7 2v10L3.500 9H1z" fill="none" stroke="#222"/><path d="M10 5l4 4M14 5l-4 4" stroke="#222"/></svg>
        <svg class="t-b" viewBox="0 0 18 14"><rect x="4" y="2.500" width="10" height="9" rx="1" fill="#222"/><path d="M14 5.500h2.500v3H14zM1 4h3v1.500H1zM1 8.500h3V10H1z" fill="#222"/></svg>
        <div class="t-time"><div>11:34</div><div>16/03/2023</div></div>
        <span class="t-badge">1</span>
      </div>
    </div>
  </div>
</template>

<style scoped>
.app {
  width: 1920px;
  height: 1080px;
  display: flex;
  flex-direction: column;
  overflow: hidden;
  background: #222933;
  color: #d8dadd;
  font: 12px/16px Roboto, "Liberation Sans", sans-serif;
}
svg { display: block; flex: none; }
i { display: block; flex: none; }
.caret { width: 0; height: 0; border: 2.500px solid transparent; border-top: 3px solid #b8bbc0; border-bottom: 0; }
.caret.dim { border-top-color: #7a818c; }
.tri-d { width: 0; height: 0; border: 4px solid transparent; border-top: 5px solid #c4c7cb; border-bottom: 0; }
.tri-d.dark { border-top-color: #555; }
.tri-up { width: 0; height: 0; border: 4px solid transparent; border-bottom: 5px solid #444; border-top: 0; }
.tri-r { width: 0; height: 0; border: 4px solid transparent; border-left: 5px solid #c4c7cb; border-right: 0; }
.i { width: 16px; height: 16px; }

/* title bar */
.titlebar { height: 28px; box-sizing: border-box; display: flex; align-items: center; padding: 0 4px 6px 4px; flex: none; }
.logo { width: 18px; font: bold 21px/20px "Liberation Sans", sans-serif; color: #b5212b; text-align: center; }
.c1 { margin: 0 20px 0 3px; }
.qa { width: 18px; height: 18px; margin-right: 6px; }
.undo { width: 18px; height: 18px; margin-left: -1px; }
.redo { width: 18px; height: 18px; margin-left: 10px; }
.undo + .caret { margin-left: 6px; }
.redo + .caret { margin-left: 7px; }
.cust { width: 10px; height: 10px; margin-left: 8px; }
.share { margin-left: 5px; width: 17px; height: 17px; }
.share-text { color: #79bdea; margin-left: 6px; }
.doc-title { width: 243px; margin-left: 376px; display: flex; justify-content: space-between; color: #e4e6e8; white-space: nowrap; }
.tri-r { margin-left: 372px; }
.kw-search { width: 178px; height: 20px; margin-left: 4px; background: #4a5363; color: #9ea4ad; font-style: italic; line-height: 20px; padding-left: 2px; box-sizing: border-box; white-space: nowrap; overflow: hidden; }
.srch { margin: 0 0 0 4px; }
.user { margin-left: 9px; }
.uname { width: 78px; margin-left: 6px; white-space: nowrap; color: #e4e6e8; }
.uname + .caret { margin-left: 2px; }
.cart { margin-left: 19px; }
.aut { margin-left: 10px; }
.aut + .caret { margin-left: 4px; }
.sep { width: 1px; height: 20px; background: #3b4453; margin-left: 9px; }
.help { width: 17px; height: 17px; border-radius: 50%; background: #b5b8bc; color: #333; text-align: center; font: bold 13px/17px Roboto, sans-serif; margin-left: 10px; }
.help + .caret { margin-left: 7px; }
.win { width: 14px; height: 14px; margin-left: 11px; }
.w-min { margin-left: 21px; }

/* ribbon tabs */
.ribbon-tabs { height: 20px; display: flex; align-items: center; padding-left: 4px; flex: none; }
.rtab { padding: 0 9.300px; line-height: 20px; color: #b7bbc1; white-space: nowrap; }
.rtab.active { background: #3b4453; color: #f0f1f2; padding: 0 9px; margin-right: 1px; }
.state-btn { width: 15px; height: 10px; background: #e4e6e8; margin-left: 23px; display: flex; justify-content: center; align-items: center; }
.state-btn + .caret { margin-left: 4px; }

/* ribbon */
.ribbon { height: 99px; display: flex; background: #3b4453; flex: none; }
.panel { display: flex; flex-direction: column; border-right: 1px solid #2a313d; box-sizing: border-box; }
.p-draw { width: 244px; }
.p-mod { width: 292px; }
.p-ann { width: 234px; }
.p-lay { width: 323px; }
.p-blk { width: 167px; }
.p-prop { width: 283px; }
.p-grp { width: 70px; }
.p-utl { width: 91px; }
.p-clip { width: 122px; }
.p-view { width: 94px; border-right: 0; }
.body { height: 80px; padding-top: 5px; box-sizing: border-box; display: flex; }
.p-mod .body { padding-left: 5px; }
.p-ann .body { padding-left: 4px; }
.p-lay .body { padding-left: 2px; }
.panel-label { height: 17px; display: flex; justify-content: center; align-items: center; gap: 5px; position: relative; white-space: nowrap; }
.p-prop .panel-label { padding-right: 10px; }
.tri-d.lab { border-width: 3.500px; border-top-width: 4px; }
.corner { width: 8px; height: 8px; position: absolute; right: 4px; top: 5px; }
.p-view .panel-label { justify-content: flex-start; padding-left: 5px; }
.p-view .corner { right: 36px; }
.big { display: flex; flex-direction: column; align-items: center; flex: none; }
.bigic { width: 40px; height: 38px; margin-bottom: 1px; }
.lbl { line-height: 15px; white-space: nowrap; }
.big .caret { margin-top: 2px; }
.w42 { width: 42px; }
.w44 { width: 44px; }
.w45 { width: 45px; }
.w46 { width: 46px; }
.w48 { width: 48px; }
.w54 { width: 54px; }
.w64 { width: 64px; }
.w66 { width: 66px; }
.w84 { width: 84px; }
.colar { margin-left: 22px; }
.rows { display: grid; grid-template-rows: repeat(3, 24px); }
.row { display: flex; align-items: center; min-width: 0; white-space: nowrap; }
.ibox { width: 20px; height: 20px; flex: none; }
.ibox.on { box-shadow: 0 0 0 1px #7ab6e0; background: #46566b; }
.ibox svg { width: 20px; height: 20px; }
.rtext { margin-left: 4px; }
.rc { margin-left: 8px; }
.r-draw { width: 45px; padding-left: 5px; box-sizing: border-box; }
.r-draw .rc { margin-left: 4px; }
.r-70 { width: 70px; }
.r-92 { width: 92px; }
.r-97 { width: 97px; }
.r-ann .rtext { margin-left: 3px; }

/* layers */
.layer-big { width: 75px; height: 72px; box-sizing: border-box; border: 1px solid #7ab6e0; background: #46566b; display: flex; flex-direction: column; align-items: center; line-height: 14.500px; white-space: nowrap; color: #e8eaec; flex: none; }
.layer-big svg { width: 40px; height: 38px; margin-bottom: 1px; }
.layer-rows { width: 244px; margin-left: 2px; }
.layer-drop { height: 22px; width: 206px; box-sizing: border-box; margin-top: 1px; background: #4a5363; border: 1px solid #2a313d; display: flex; align-items: center; padding: 0 2px 0 2px; color: #e8eaec; gap: 1px; }
.s { width: 18px; height: 18px; }
.swatch { width: 13px; height: 13px; background: #00ffff; border: 1px solid #222; flex: none; box-sizing: border-box; margin-left: 3px; }
.dtext { margin-left: 4px; flex: 1; }
.lt { width: 22px; height: 20px; margin-right: 2px; }

/* properties */
.prop-ic { width: 18px; }
.s18 { width: 16px; height: 18px; }
.prop-drops { width: 178px; }
.prop-ic, .prop-drops { grid-template-rows: 23.500px 23.500px 24px; }
.pdrop { width: 178px; height: 21px; background: #4a5363; border: 1px solid #2a313d; box-sizing: border-box; display: flex; align-items: center; padding: 0 2px 0 12px; color: #e4e6e8; }
.big-sw { width: 16px; height: 18px; border: 0; margin-left: 0; }
.ptext { margin-left: 10px; flex: 1; }
.pline { height: 1px; width: 64px; background: #e8e8e8; margin-left: -9px; flex: none; }
.ptext2 { margin-left: 3px; flex: 1; }

/* document tabs */
.doc-tabs { height: 30px; flex: none; display: flex; align-items: flex-end; padding: 0 0 0 22px; border-bottom: 4px solid #3b4453; box-sizing: border-box; }
.dtab { height: 21px; width: 124px; background: #2d3543; color: #a8adb4; padding-left: 10px; box-sizing: border-box; line-height: 21px; border-radius: 6px 6px 0 0; }
.dtab.active { width: 121px; background: #3b4453; color: #eceef0; padding-left: 9px; display: flex; justify-content: space-between; padding-right: 10px; }
.dtab b { font-weight: 700; letter-spacing: -0.1px; }
.x { color: #9ea4ad; font-size: 13px; }
.dtab.plus { width: 23px; margin-left: 6px; padding: 0; text-align: center; color: #9ea4ad; font-size: 15px; font-weight: 700; }

/* viewport */
.main { flex: 1; display: flex; min-height: 0; }
.viewport { width: 1500px; background: #212830; position: relative; overflow: hidden; flex: none; }
.canvas { position: absolute; left: 0; top: 0; }
.cube-t { font: italic bold 8.500px "Liberation Sans", sans-serif; fill: #33383f; }
.cube-t.sm { font-size: 8px; }
.ring-t { font: bold 10px "Liberation Sans", sans-serif; fill: #c2c6ca; }
.vp-label { position: absolute; left: 3px; top: 6px; color: #d4d6d9; }
.vp-controls { position: absolute; left: 1437px; top: 8px; display: flex; gap: 6px; }
.vp-controls .i { width: 14px; height: 14px; }
.named { position: absolute; left: 1373px; top: 193px; width: 87px; height: 18px; box-sizing: border-box; background: #6e7580; border-radius: 3px; color: #a8adb4; font-size: 10.500px; line-height: 18px; padding-left: 4px; display: flex; align-items: center; gap: 6px; box-shadow: 0 0 0 1px #8a9099 inset; }
.tri-o { width: 0; height: 0; border: 3.500px solid transparent; border-top: 4px solid #9ea4ad; border-bottom: 0; }
.cmd-lines { position: absolute; left: 368px; top: 740px; display: flex; flex-direction: column; align-items: flex-start; gap: 5px; font: 11.650px/15px "DejaVu Sans Mono", monospace; color: #c9cbcd; }
.cmd-lines span { background: #55595e; padding: 0 3px 0 2px; white-space: pre; border-radius: 2px; }
.cmd-lines .cur { color: #f2f2f2; }
.cmd-bar { position: absolute; left: 306px; top: 799px; display: flex; height: 26px; }
.cmd-tools { width: 56px; background: #2a3240; display: flex; align-items: center; border-radius: 3px 0 0 3px; }
.cmd-tools svg { width: 13px; height: 13px; margin-left: 3px; }
.cmd-tools svg:last-child { width: 16px; height: 16px; margin-left: 9px; }
.grip { width: 6px; height: 18px; margin-left: 4px; background: repeating-linear-gradient(0deg, #aab0b7 0 2px, transparent 2px 3px); }
.cmd-input { width: 832px; background: #bcbdbf; display: flex; align-items: center; padding: 0 7px 0 4px; box-sizing: border-box; border-radius: 0 2px 2px 0; }
.prompt { width: 16px; height: 14px; }
.tri-d.dark { margin-left: 3px; }
.hint { font: italic 11.650px "DejaVu Sans Mono", monospace; color: #555; margin-left: 6px; flex: 1; }

/* palette */
.palette { width: 420px; padding: 2px 0 3px 1px; box-sizing: border-box; display: flex; flex-direction: column; flex: none; background: #262d38; }
.pal-title { height: 20px; background: #2e3644; color: #e0e2e5; line-height: 20px; display: flex; align-items: center; gap: 6px; padding-left: 8px; flex: none; white-space: nowrap; }
.pgrip { width: 3px; height: 12px; background: repeating-linear-gradient(0deg, #9ea4ad 0 1px, transparent 1px 2px); }
.pal-body { flex: 1; background: #3b4453; display: flex; flex-direction: column; min-height: 0; border-radius: 4px 4px 0 0; }
.pal-cur { height: 33px; flex: none; display: flex; justify-content: space-between; align-items: flex-start; padding-left: 6px; box-sizing: border-box; }
.pal-cur > span { margin-top: 11px; color: #e4e6e8; }
.pal-search { width: 124px; height: 16px; margin-top: 7px; background: #4a5363; color: #aeb3b9; display: flex; justify-content: space-between; align-items: center; white-space: nowrap; padding-right: 1px; box-sizing: border-box; }
.pal-search .i { width: 12px; height: 12px; }
.pal-tools { height: 19px; display: flex; align-items: flex-start; gap: 7px; padding-left: 3px; flex: none; box-sizing: border-box; }
.pt { width: 16px; height: 16px; }
.pt.r { margin-left: auto; }
.pal-tools .pt:last-child { margin-right: 10px; }
.ptsep { width: 1px; height: 18px; background: #2a313d; margin: 0 2px; }
.pal-table { flex: 1; display: flex; min-height: 0; padding-left: 2px; }
.thead { height: 23px; background: #465061; display: flex; align-items: center; flex: none; color: #dfe1e4; }
.gutter { width: 27px; border-right: 1px solid #2a313d; box-sizing: border-box; margin-right: 2px; flex: none; }
.chev { color: #e8eaec; font: bold 21px/18px "Liberation Sans", sans-serif; margin: -3px auto 0; display: block; text-align: center; width: 100%; }
.pane { background: #3b4453; min-width: 0; overflow: hidden; }
.names { width: 209px; flex: none; margin-right: 2px; position: relative; border-right: 1px solid #2a313d; box-sizing: border-box; }
.details { flex: 1; }
.th { height: 23px; line-height: 25px; border-right: 1px solid #3b4453; box-sizing: border-box; padding-left: 4px; white-space: nowrap; overflow: hidden; }
.c-s { width: 18px; flex: none; }
.c-n { flex: 1; }
.sort { position: absolute; right: 4px; top: 10px; border-bottom-color: #c4c7cb; }
.c-i { width: 18px; flex: none; }
.c-c { width: 72px; flex: none; }
.c-t { flex: 1; white-space: nowrap; padding-left: 4px; }
.lrow { height: 18px; display: flex; align-items: center; color: #d8dadd; white-space: nowrap; }
.lrow.sel { background: #6a7f9f; }
.st { height: 15px; }
.lname { margin-left: 2px; }
.colorc { display: flex; align-items: center; gap: 4px; padding-left: 2px; box-sizing: border-box; }
.chip { width: 11px; height: 11px; border: 1px solid #222; flex: none; }
.pal-scroll { height: 17px; display: flex; flex: none; padding-left: 2px; }
.gutter-b { width: 27px; margin-right: 2px; background: #353d4b; padding-top: 1px; }
.hscroll { flex: 1; background: #efefef; position: relative; }
.thumb { position: absolute; left: 17px; top: 8px; width: 110px; height: 3px; background: #8b8b8b; }
.pal-status { height: 37px; flex: none; display: flex; align-items: center; gap: 3px; padding: 13px 0 0 1px; border-bottom: 1px solid #2a313d; white-space: nowrap; color: #e0e2e5; box-sizing: border-box; }
.pal-status .pt { width: 18px; height: 18px; }
.pal-status .tri-d { border-width: 3.500px; border-top-width: 4px; margin: 0 2px 0 0; }

/* status bar */
.statusbar { height: 29px; flex: none; display: flex; border-top: 1px solid #3b4453; box-sizing: border-box; }
.ltabs { display: flex; padding-left: 12px; height: 18px; gap: 1px; }
.ltab { background: #2d3543; color: #b7bbc1; height: 18px; line-height: 18px; padding: 0 10px; clip-path: polygon(0 0, 100% 0, calc(100% - 5px) 100%, 5px 100%); }
.ltab.active { background: #3b4453; color: #fff; font-weight: 700; padding: 0 14px 0 12px; }
.ltab.add { font-size: 15px; font-weight: 700; padding: 0 9px; }
.status-right { margin-left: auto; display: flex; height: 25px; margin-right: 2px; }
.modelo { width: 56px; background: #3b4453; text-align: center; line-height: 25px; color: #f0f1f2; margin-right: 3px; }
.sgroup { display: flex; gap: 1px; background: #3b4453; margin-right: 3px; }
.sgroup.tight { margin-left: -2px; }
.sgroup.plain { background: transparent; margin-left: -2px; margin-right: 0; }
.sbtn { display: flex; align-items: center; justify-content: center; height: 25px; }
.sbtn.on { background: #5a8fc8; }
.sbtn svg { width: 18px; height: 18px; }
.stext { color: #d4d6d9; font-size: 12px; }

/* taskbar */
.taskbar { height: 48px; flex: none; background: #e1dfdc; display: flex; align-items: center; color: #222; position: relative; }
.weather { width: 693px; padding-left: 22px; box-sizing: border-box; display: flex; gap: 10px; align-items: center; line-height: 16px; flex: none; }
.sun { width: 20px; height: 25px; border-radius: 50%; background: linear-gradient(#f4b83c, #ef7e1a); flex: none; }
.muted { color: #666; }
.winlogo { width: 24px; height: 24px; }
.pill { width: 106px; height: 30px; margin: 0 4px 0 15px; border-radius: 15px; background: #f6f5f3; display: flex; align-items: center; justify-content: center; gap: 5px; box-shadow: 0 1px 1px #cfcdca; flex: none; box-sizing: border-box; }
.pill svg { width: 15px; height: 15px; }
.app-i { width: 44px; height: 48px; display: flex; align-items: center; justify-content: center; position: relative; flex: none; }
.app-i svg { width: 26px; height: 26px; }
.dot { position: absolute; left: 19px; bottom: 3px; width: 6px; height: 3px; border-radius: 2px; background: #777; }
.acad::before { content: ""; position: absolute; left: 3px; top: 5px; width: 38px; height: 38px; background: #ecebe9; border-radius: 4px; }
.acad-a { position: relative; width: 24px; height: 26px; background: #f3dcd6; color: #b3202a; font: bold 25px/26px "Liberation Sans", sans-serif; text-align: center; }
.run { position: absolute; left: 14px; bottom: 6px; width: 16px; height: 3px; border-radius: 2px; background: #22808f; }
.tray { display: flex; align-items: center; margin-left: 398px; }
.t-up { width: 16px; height: 16px; }
.t-g { width: 16px; height: 20px; margin-left: 9px; }
.t-por { width: 30px; margin-left: 10px; text-align: center; }
.t-w { width: 16px; height: 13px; margin-left: 15px; }
.t-s { width: 15px; height: 13px; margin-left: 8px; }
.t-b { width: 16px; height: 13px; margin-left: 9px; }
.t-time { width: 70px; margin-left: 5px; text-align: right; line-height: 16px; }
.t-badge { width: 16px; height: 18px; margin-left: 11px; border-radius: 50%; background: #1c7d96; color: #fff; text-align: center; line-height: 18px; }
</style>

<style>
html, body { margin: 0; background: #222933; }
</style>
